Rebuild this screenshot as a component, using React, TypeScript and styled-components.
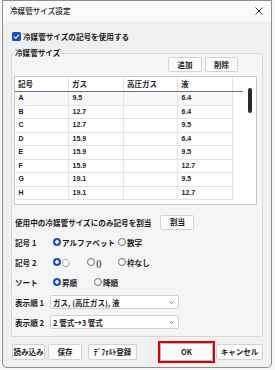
import React from "react";
import styled, { createGlobalStyle } from "styled-components";

const JP = `"Noto Sans CJK JP", "Noto Sans CJK SC", sans-serif`;
const LAT = `"Liberation Sans", "Noto Sans CJK JP", sans-serif`;

const GlobalStyle = createGlobalStyle`
  html, body { margin: 0; padding: 0; background: #f6f6f6; }
  body { font-family: ${JP}; color: #1b1b1b; }
  * { box-sizing: border-box; }
`;

const Window = styled.div`
  margin-left: 2px;
  width: 270px;
  height: 368px;
  border: 1px solid #8d8d8d;
  border-radius: 0 0 5px 5px;
  background: #f0f0f0;
  display: flex;
  flex-direction: column;
  overflow: hidden;
`;

const TitleBar = styled.div`
  height: 20px;
  flex: none;
  background: #fafafa;
  display: flex;
  align-items: center;
  justify-content: space-between;
  padding: 0 8px 0 7px;
`;

const Title = styled.span`
  font-size: 7.6px;
  font-weight: 500;
  line-height: 10px;
`;

const Close = styled.svg`
  width: 8px;
  height: 8px;
  display: block;
`;

const Body = styled.div`
  flex: 1;
  display: flex;
  flex-direction: column;
  padding: 0 8px;
`;

const CheckRow = styled.label`
  margin-top: 9px;
  height: 12px;
  display: flex;
  align-items: center;
  gap: 2px;
  padding-left: 1px;
  font-size: 7.6px;
  font-weight: 700;
`;

const CheckBox = styled.span`
  width: 9px;
  height: 9px;
  border-radius: 1.5px;
  background: #1c4fc6;
  display: flex;
  align-items: center;
  justify-content: center;
`;

const Group = styled.fieldset`
  margin: 7px 0 0;
  padding: 0 5px 4px 2px;
  border: 1px solid #d8d8d8;
  border-radius: 2px;
  background: #f5f5f5;
  min-width: 0;
  display: flex;
  flex-direction: column;
`;

const Legend = styled.legend`
  font-size: 7.6px;
  font-weight: 700;
  line-height: 8px;
  padding: 0 1px;
  margin-left: 0;
`;

const Btn = styled.button<{ $w: number }>`
  width: ${(p) => p.$w}px;
  height: 15px;
  padding: 0;
  background: #fdfdfd;
  border: 1px solid #d2d2d2;
  border-radius: 2px;
  font-family: ${JP};
  font-size: 7.5px;
  font-weight: 700;
  color: #1b1b1b;
  line-height: 12px;
  display: flex;
  align-items: center;
  justify-content: center;
  flex: none;
`;

const TopButtons = styled.div`
  display: flex;
  justify-content: flex-end;
  gap: 3px;
  margin-right: 19px;
`;

const Table = styled.div`
  margin-top: 4px;
  width: 243px;
  height: 129px;
  border: 1px solid #c8c8c8;
  background: #fff;
  display: flex;
`;

const TableMain = styled.div`
  width: 228px;
  display: flex;
  flex-direction: column;
`;

const HeaderRow = styled.div`
  display: flex;
  height: 15px;
  border-bottom: 1px solid #6c6c90;
`;

const HeadCell = styled.div<{ $w: number }>`
  width: ${(p) => p.$w}px;
  border-right: 1px solid #e0e0e0;
  padding-left: 3px;
  font-family: ${JP};
  font-size: 7.5px;
  font-weight: 700;
  line-height: 14px;
  flex: none;
`;

const Row = styled.div<{ $hl?: boolean }>`
  display: flex;
  width: 218px;
  height: 13.5px;
  border-bottom: 1px solid #e4e4e4;
  background: ${(p) => (p.$hl ? "#f7f7f7" : "#fff")};
`;

const Cell = styled.div<{ $w: number }>`
  width: ${(p) => p.$w}px;
  border-right: 1px solid #e4e4e4;
  padding-left: 3.5px;
  font-family: ${LAT};
  font-size: 7px;
  font-weight: 700;
  line-height: 12.5px;
  flex: none;
`;

const ScrollTrack = styled.div`
  flex: 1;
  padding: 11px 0 0 5px;
`;

const Thumb = styled.div`
  width: 4px;
  height: 25px;
  border-radius: 2px;
  background: #2a2a2a;
`;

const OptRow = styled.div<{ $first?: boolean }>`
  height: 20px;
  margin-top: ${(p) => (p.$first ? 7 : 0)}px;
  display: flex;
  align-items: center;
  padding-left: 1px;
  font-size: 7.6px;
  font-weight: 700;
`;

const AssignText = styled.span`
  margin-right: 9px;
`;

const RowLabel = styled.span<{ $w: number }>`
  width: ${(p) => p.$w}px;
  flex: none;
`;

const RadioOpt = styled.span<{ $w?: number }>`
  display: flex;
  align-items: center;
  gap: 1px;
  width: ${(p) => (p.$w ? `${p.$w}px` : "auto")};
  flex: none;
`;

const RadioDot = styled.span<{ $on?: boolean }>`
  width: 8px;
  height: 8px;
  border-radius: 50%;
  flex: none;
  ${(p) =>
    p.$on
      ? `background: radial-gradient(circle, #ffffff 0 1.5px, #1554c2 2px);`
      : `background: #fbfbfb; border: 1px solid #707070;`}
`;

const Combo = styled.div`
  width: 129px;
  height: 14px;
  background: #fff;
  border: 1px solid #d0d0d0;
  border-radius: 2px;
  display: flex;
  align-items: center;
  justify-content: space-between;
  padding: 0 4px 0 2px;
  font-size: 7.5px;
  font-weight: 700;
`;

const Chevron = styled.svg`
  width: 5px;
  height: 3px;
  display: block;
`;

const Footer = styled.div`
  margin-top: 4px;
  height: 22px;
  display: flex;
  align-items: center;
  padding-left: 1px;
`;

const FootBtn = styled(Btn)<{ $gap?: number }>`
  height: 16px;
  margin-left: ${(p) => p.$gap ?? 0}px;
`;

const Spacer = styled.div`
  flex: 1;
`;

const OkFrame = styled.div`
  width: 57px;
  height: 22px;
  border: 2px solid #e10000;
  flex: none;
  display: flex;
  margin-right: 1px;
`;

const OkBtn = styled(Btn)`
  width: 100%;
  height: 100%;
  border-color: #9cbbe0;
  border-radius: 1px;
`;

const cols = [54, 55, 54, 55];
const heads = ["記号", "ガス", "高圧ガス", "液"];
const data: [string, string, string, string][] = [
  ["A", "9.5", "", "6.4"],
  ["B", "12.7", "", "6.4"],
  ["C", "12.7", "", "9.5"],
  ["D", "15.9", "", "6.4"],
  ["E", "15.9", "", "9.5"],
  ["F", "15.9", "", "12.7"],
  ["G", "19.1", "", "9.5"],
  ["H", "19.1", "", "12.7"],
];

const Radio = ({ on, label, w }: { on?: boolean; label: string; w?: number }) => (
  <RadioOpt $w={w}>
    <RadioDot $on={on} />
    <span>{label}</span>
  </RadioOpt>
);

const Down = () => (
  <Chevron viewBox="0 0 5 3">
    <path d="M0.5 0.5 L2.5 2.5 L4.5 0.5" fill="none" stroke="#555" strokeWidth="0.8" />
  </Chevron>
);

export default function App() {
  return (
    <>
      <GlobalStyle />
      <Window>
        <TitleBar>
          <Title>冷媒管サイズ設定</Title>
          <Close viewBox="0 0 8 8">
            <path d="M0.5 0.5 L7.5 7.5 M7.5 0.5 L0.5 7.5" stroke="#222" strokeWidth="0.9" />
          </Close>
        </TitleBar>
        <Body>
          <CheckRow>
            <CheckBox>
              <svg width="7" height="7" viewBox="0 0 7 7">
                <path d="M1 3.6 L2.8 5.3 L6 1.6" fill="none" stroke="#fff" strokeWidth="1.1" />
              </svg>
            </CheckBox>
            <span>冷媒管サイズの記号を使用する</span>
          </CheckRow>
          <Group>
            <Legend>冷媒管サイズ</Legend>
            <TopButtons>
              <Btn $w={34}>追加</Btn>
              <Btn $w={33}>削除</Btn>
            </TopButtons>
            <Table>
              <TableMain>
                <HeaderRow>
                  {heads.map((h, i) => (
                    <HeadCell key={h} $w={cols[i]}>
                      {h}
                    </HeadCell>
                  ))}
                </HeaderRow>
                {data.map((r, ri) => (
                  <Row key={r[0]} $hl={ri === 0}>
                    {r.map((c, i) => (
                      <Cell key={i} $w={cols[i]}>
                        {c}
                      </Cell>
                    ))}
                  </Row>
                ))}
              </TableMain>
              <ScrollTrack>
                <Thumb />
              </ScrollTrack>
            </Table>
            <OptRow $first>
              <AssignText>使用中の冷媒管サイズにのみ記号を割当</AssignText>
              <Btn $w={34}>割当</Btn>
            </OptRow>
            <OptRow>
              <RowLabel $w={38}>記号 1</RowLabel>
              <Radio on label="アルファベット" w={65} />
              <Radio label="数字" />
            </OptRow>
            <OptRow>
              <RowLabel $w={38}>記号 2</RowLabel>
              <Radio on label="○" w={34} />
              <Radio label="()" w={31} />
              <Radio label="枠なし" />
            </OptRow>
            <OptRow>
              <RowLabel $w={38}>ソート</RowLabel>
              <Radio on label="昇順" w={41} />
              <Radio label="降順" />
            </OptRow>
            <OptRow>
              <RowLabel $w={35}>表示順 1</RowLabel>
              <Combo>
                <span>ガス, (高圧ガス), 液</span>
                <Down />
              </Combo>
            </OptRow>
            <OptRow>
              <RowLabel $w={35}>表示順 2</RowLabel>
              <Combo>
                <span>2 管式→3 管式</span>
                <Down />
              </Combo>
            </OptRow>
          </Group>
          <Footer>
            <FootBtn $w={33}>読み込み</FootBtn>
            <FootBtn $w={34} $gap={3}>保存</FootBtn>
            <FootBtn $w={49} $gap={6}>ﾃﾞﾌｫﾙﾄ登録</FootBtn>
            <Spacer />
            <OkFrame>
              <OkBtn $w={53}>OK</OkBtn>
            </OkFrame>
            <FootBtn $w={47}>キャンセル</FootBtn>
          </Footer>
        </Body>
      </Window>
    </>
  );
}
